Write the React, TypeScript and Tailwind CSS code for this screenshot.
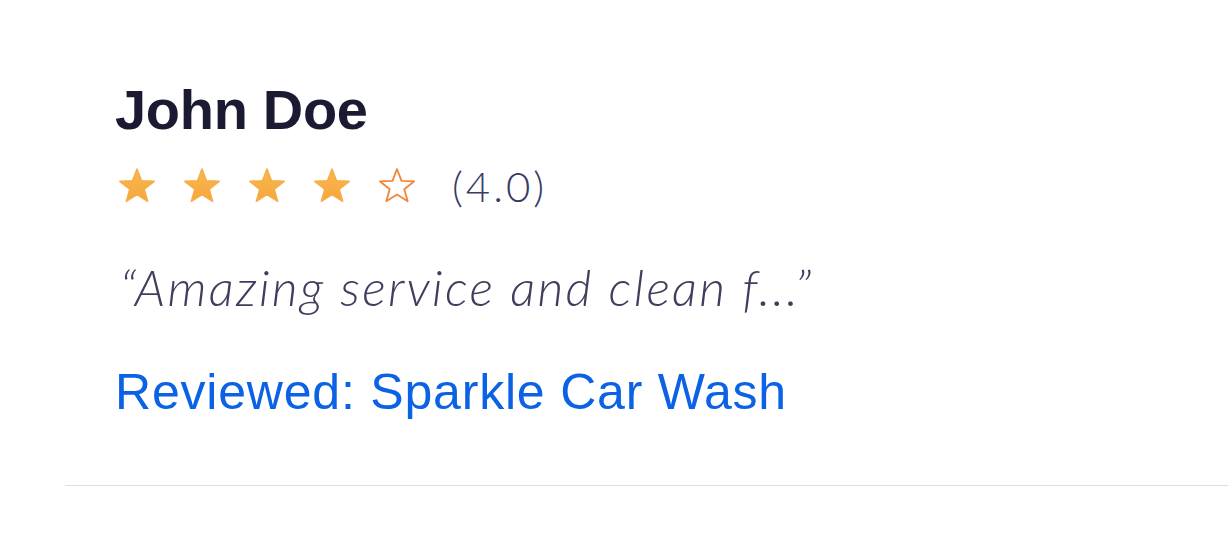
import React from "react";

const Star = ({ filled }: { filled: boolean }) => (
  <svg width="40" height="40" viewBox="0 0 24 24" className="shrink-0">
    <defs>
      <linearGradient id="sg" x1="0" y1="0" x2="0" y2="1">
        <stop offset="0%" stopColor="#f9b84f" />
        <stop offset="100%" stopColor="#f6a63c" />
      </linearGradient>
    </defs>
    <path
      d="M12 1.8L14.7 8.9L22.3 9.2L16.37 13.95L18.4 21.2L12 17.1L5.6 21.2L7.63 13.95L1.7 9.2L9.3 8.9Z"
      fill={filled ? "url(#sg)" : "none"}
      stroke={filled ? "#f7ad45" : "#f2873a"}
      strokeWidth={filled ? 0.9 : 1.1}
      strokeLinejoin="round"
    />
  </svg>
);

export default function App() {
  return (
    <div className="w-[1228px] h-[548px] bg-white" style={{ fontFamily: '"Liberation Sans", Arial, sans-serif' }}>
      <div className="ml-[65px] border-b border-[#dedede] pb-[68px]">
        <div className="pl-[50px] pt-[82px]">
          <div className="text-[56px] leading-none font-bold text-[#1b1a33] tracking-[-0.3px]">John Doe</div>
          <div className="mt-[28px] h-[40px] flex items-center">
            <div className="flex items-center gap-[25px] ml-[2px]">
              <Star filled />
              <Star filled />
              <Star filled />
              <Star filled />
              <Star filled={false} />
            </div>
            <span
              className="ml-[35px] text-[42px] leading-none font-light text-[#3b3a63] tracking-[3px]"
              style={{ fontFamily: 'Lato, "Liberation Sans", sans-serif' }}
            >
              (4.0)
            </span>
          </div>
          <div
            className="mt-[56px] text-[50px] leading-none italic font-light text-[#3f3e5e] pl-[5px] tracking-[2.3px]"
            style={{ fontFamily: 'Lato, "Liberation Sans", sans-serif' }}
          >
            “Amazing service and clean f...”
          </div>
          <div className="mt-[55px] text-[50px] leading-none text-[#0b62e4] tracking-[0.8px]">
            Reviewed: Sparkle Car Wash
          </div>
        </div>
      </div>
    </div>
  );
}
